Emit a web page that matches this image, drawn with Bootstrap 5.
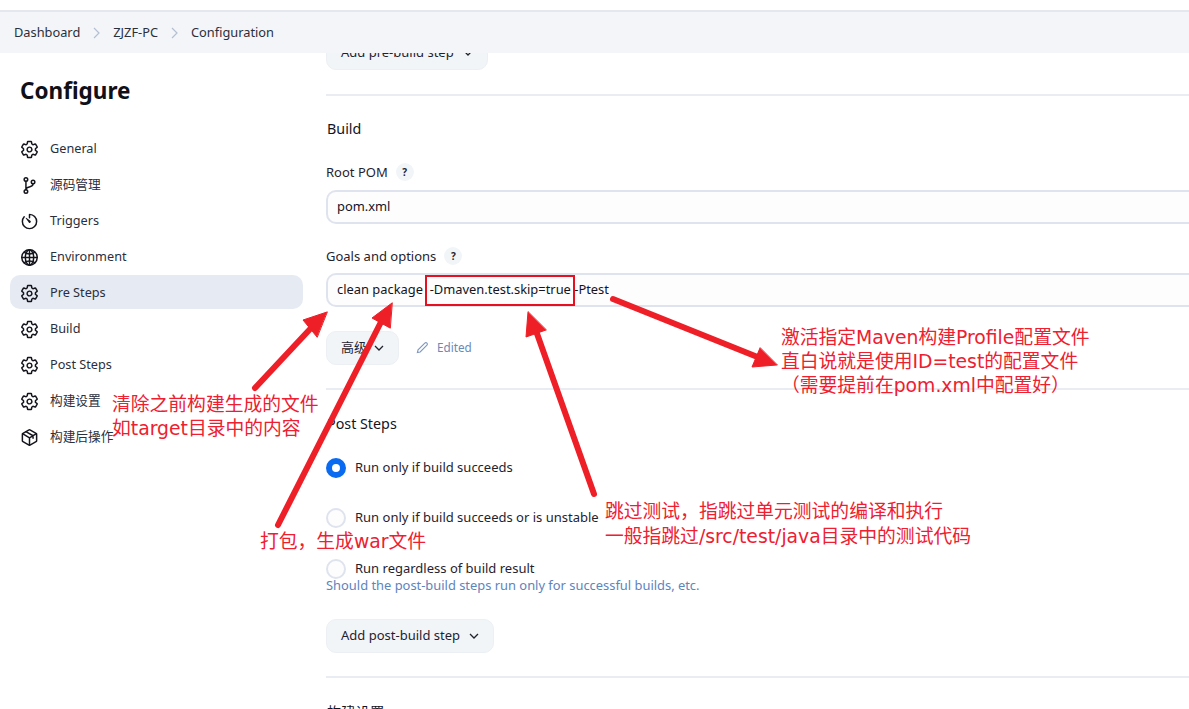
<!DOCTYPE html>
<html lang="zh"><head><meta charset="utf-8"><title>Configure</title>
<link href="https://cdn.jsdelivr.net/npm/bootstrap@5.3.0/dist/css/bootstrap.min.css" rel="stylesheet">
<style>
html,body{height:709px;overflow:hidden}
body{font-family:"Noto Sans","Noto Sans CJK SC",sans-serif;font-size:13px;color:#14141f;background:#fff;position:relative}
.top-strip{height:12px;border-bottom:2px solid #e4e7ee}
.crumbs{height:41px;background:rgba(243,245,248,.96);position:relative;z-index:2;padding-left:14px;gap:10px;font-size:12.8px;color:#2a2f3c}
.crumbs svg{width:9px;height:12px;margin:0 2px}
.page{height:656px;overflow:hidden}
.side{width:326px;flex:none;padding:0 23px 0 10px}
.side h1{font-size:22.5px;font-weight:700;line-height:30px;margin:23px 0 25px 10px;color:#101018}
.side-item{height:34px;margin-bottom:2px;padding:2px 0 0 10px;gap:11px;border-radius:10px;color:#2a2f3c;font-size:12.7px}
.side-item svg{width:19px;height:19px;flex:none}
.side-item.on{background:#e6eaf2}
.ico-line{fill:none;stroke:#14151c;stroke-width:40;stroke-linejoin:round;stroke-linecap:round}
.ico-fill{fill:#14151c}
.main{flex:1;margin-top:-17px;min-width:0}
.soft-btn{height:34px;width:fit-content;border-radius:10px;background:#f2f5f8;border:1px solid #ecf0f4;padding:0 14px;gap:9px;font-size:13px;color:#1e2230}
.soft-btn svg{width:10px;height:6px}
.soft-btn.tight{gap:7px}
.rule{height:2px;background:#e9edf3;border:0;opacity:1;margin:0}
.sect{font-size:14.3px;line-height:20px;color:#14141f;margin-left:1px}
.fld-label{font-size:13px;line-height:18px;gap:8px;color:#1f2330}
.hint{width:18px;height:18px;border-radius:50%;background:#f2f5f8;font-size:10px;font-weight:700}
.txt{height:34px;border:2px solid #dfe3ee;border-right:0;border-radius:10px 0 0 10px;background:#fdfdfe;padding-left:9px;font-size:12.9px;color:#14141f;width:calc(100% + 10px)}
.edited{color:#6b89b5;font-size:11.7px;gap:8px}
.edited svg{width:13px;height:13px}
.radio-row{gap:9px;font-size:13px;color:#1f2330;height:20px}
.radio-dot{width:20px;height:20px;border-radius:50%;border:2px solid #dfe3ee;background:#fdfdfe;flex:none}
.radio-dot.on{border:6px solid #0b6bf0;background:#fff}
.help-line{font-size:12.9px;color:#5d84bd;line-height:14px}
.draw{position:absolute;left:0;top:0;width:1189px;height:709px;pointer-events:none;z-index:5}
.note{position:absolute;z-index:6;color:#ee2030;font-family:"DejaVu Sans","Noto Sans CJK SC",sans-serif;font-size:18.8px;line-height:24px;white-space:nowrap}
.m-a{left:112px;top:393px}
.m-b{left:260px;top:530px}
.m-c{left:605px;top:499px;line-height:25px}
.m-d{left:781px;top:326px}
.redbox{position:absolute;left:425px;top:275px;width:150px;height:31px;border:2px solid #e8101f;z-index:4}
</style></head><body>
<div class="top-strip"></div>
<nav class="crumbs d-flex align-items-center">
<span>Dashboard</span><svg viewBox="0 0 9 12"><path d="M2 1l5 5-5 5" fill="none" stroke="#b4c0d2" stroke-width="1.2"/></svg>
<span>ZJZF-PC</span><svg viewBox="0 0 9 12"><path d="M2 1l5 5-5 5" fill="none" stroke="#b4c0d2" stroke-width="1.2"/></svg>
<span>Configuration</span></nav>
<svg width="0" height="0" class="position-absolute"><defs>
<symbol id="gear" viewBox="0 0 512 512"><path class="ico-line" d="M262.29 192.31a64 64 0 1057.4 57.4 64.13 64.13 0 00-57.4-57.4zM416.39 256a154.34 154.34 0 01-1.53 20.79l45.21 35.46a10.81 10.81 0 012.45 13.75l-42.77 74a10.81 10.81 0 01-13.14 4.59l-44.9-18.08a16.11 16.11 0 00-15.17 1.75A164.48 164.48 0 01325 400.8a15.94 15.94 0 00-8.82 12.14l-6.73 47.89a11.08 11.08 0 01-10.68 9.17h-85.54a11.11 11.11 0 01-10.69-8.87l-6.72-47.82a16.07 16.07 0 00-9-12.22 155.3 155.3 0 01-21.46-12.57 16 16 0 00-15.11-1.71l-44.89 18.07a10.81 10.81 0 01-13.14-4.58l-42.77-74a10.8 10.8 0 012.45-13.75l38.21-30a16.05 16.05 0 006-14.08c-.36-4.17-.58-8.33-.58-12.5s.21-8.27.58-12.35a16 16 0 00-6.07-13.94l-38.19-30A10.81 10.81 0 0149.48 186l42.77-74a10.81 10.81 0 0113.14-4.59l44.9 18.08a16.11 16.11 0 0015.17-1.75A164.48 164.48 0 01187 111.2a15.94 15.94 0 008.82-12.14l6.73-47.89A11.08 11.08 0 01213.23 42h85.54a11.11 11.11 0 0110.69 8.87l6.72 47.82a16.07 16.07 0 009 12.22 155.3 155.3 0 0121.46 12.57 16 16 0 0015.11 1.71l44.89-18.07a10.81 10.81 0 0113.14 4.58l42.77 74a10.8 10.8 0 01-2.45 13.75l-38.21 30a16.05 16.05 0 00-6.05 14.08c.33 4.14.55 8.3.55 12.47z"/></symbol>
</defs></svg>
<div class="page d-flex">
<aside class="side">
<h1>Configure</h1>
<div class="side-item d-flex align-items-center"><svg><use href="#gear"/></svg>General</div>
<div class="side-item d-flex align-items-center"><svg viewBox="0 0 512 512"><g class="ico-line"><circle cx="160" cy="96" r="48"/><circle cx="160" cy="416" r="48"/><circle cx="352" cy="160" r="48"/><path d="M160 368V144M352 208c0 128-192 48-192 160"/></g></svg>源码管理</div>
<div class="side-item d-flex align-items-center"><svg viewBox="0 0 512 512"><path class="ico-line" d="M112.91 128A191.85 191.85 0 0064 254c-1.18 106.35 85.65 193.8 192 194 106.2.2 192-85.83 192-192 0-104.54-83.55-189.61-187.5-192a4.36 4.36 0 00-4.5 4.37V152"/><path class="ico-fill" d="M233.38 278.63l-79-113a8.13 8.13 0 0111.32-11.32l113 79a32.5 32.5 0 01-37.25 53.26 33.21 33.21 0 01-8.07-7.94z"/></svg>Triggers</div>
<div class="side-item d-flex align-items-center"><svg viewBox="0 0 512 512"><g class="ico-line"><path d="M256 48C141.13 48 48 141.13 48 256s93.13 208 208 208 208-93.13 208-208S370.87 48 256 48z"/><path d="M256 48c-58.07 0-112.67 93.31-112.67 208S197.93 464 256 464s112.67-93.31 112.67-208S314.07 48 256 48z"/><path d="M117.33 117.33c38.24 27.15 86.38 43.34 138.67 43.34s100.43-16.19 138.67-43.34M394.67 394.67c-38.24-27.15-86.38-43.34-138.67-43.34s-100.43 16.19-138.67 43.34"/><path d="M256 48v416M464 256H48"/></g></svg>Environment</div>
<div class="side-item on d-flex align-items-center"><svg><use href="#gear"/></svg>Pre Steps</div>
<div class="side-item d-flex align-items-center"><svg><use href="#gear"/></svg>Build</div>
<div class="side-item d-flex align-items-center"><svg><use href="#gear"/></svg>Post Steps</div>
<div class="side-item d-flex align-items-center"><svg><use href="#gear"/></svg>构建设置</div>
<div class="side-item d-flex align-items-center"><svg viewBox="0 0 512 512"><g class="ico-line"><path d="M448 341.370V170.610A32 32 0 00432.110 143l-152-88.460a47.940 47.940 0 00-48.240 0L79.890 143A32 32 0 0064 170.610v170.760A32 32 0 0079.890 369l152 88.460a48 48 0 0048.240 0l152-88.460A32 32 0 00448 341.370z"/><path d="M69 154l187 110 187-110M256 464V264M160 99l192 110v70"/></g></svg>构建后操作</div>
</aside>
<main class="main">
<div class="soft-btn d-flex align-items-center">Add pre-build step<svg viewBox="0 0 10 6"><path d="M1 1l4 4 4-4" fill="none" stroke="#20222c" stroke-width="1.300"/></svg></div>
<hr class="rule mt-4">
<div class="sect" style="margin-top:23px">Build</div>
<div class="fld-label d-flex align-items-center" style="margin-top:24px">Root POM<span class="hint d-flex align-items-center justify-content-center">?</span></div>
<div class="txt d-flex align-items-center" style="margin-top:9px">pom.xml</div>
<div class="fld-label d-flex align-items-center" style="margin-top:23px">Goals and options<span class="hint d-flex align-items-center justify-content-center">?</span></div>
<div class="txt d-flex align-items-center" style="margin-top:8px">clean package&nbsp; -Dmaven.test.skip=true -Ptest</div>
<div class="d-flex align-items-center" style="margin-top:24px;gap:17px"><div class="soft-btn tight d-flex align-items-center">高级<svg viewBox="0 0 10 6"><path d="M1 1l4 4 4-4" fill="none" stroke="#20222c" stroke-width="1.300"/></svg></div>
<div class="edited d-flex align-items-center"><svg viewBox="0 0 14 14"><path d="M1.500 12.500l.7-3L9.500 2.200a1.500 1.500 0 0 1 2.300 2.300L4.500 11.800z" fill="none" stroke="#7f98bf" stroke-width="1.200"/></svg>Edited</div></div>
<hr class="rule" style="margin-top:23px">
<div class="sect" style="margin-top:24px">Post Steps</div>
<div class="radio-row d-flex align-items-center" style="margin-top:24px"><span class="radio-dot on"></span>Run only if build succeeds</div>
<div class="radio-row d-flex align-items-center" style="margin-top:30px"><span class="radio-dot"></span>Run only if build succeeds or is unstable</div>
<div class="radio-row d-flex align-items-center" style="margin-top:31px"><span class="radio-dot"></span>Run regardless of build result</div>
<div class="help-line" style="margin-top:-1px">Should the post-build steps run only for successful builds, etc.</div>
<div class="soft-btn d-flex align-items-center" style="margin-top:27px">Add post-build step<svg viewBox="0 0 10 6"><path d="M1 1l4 4 4-4" fill="none" stroke="#20222c" stroke-width="1.300"/></svg></div>
<hr class="rule" style="margin-top:23px">
<div class="sect" style="margin-top:25px">构建设置</div>
</main>
</div>
<div class="redbox"></div>
<svg class="draw" viewBox="0 0 1189 709">
<g fill="#ee1f27" stroke="#ee1f27" stroke-linecap="round">
<path d="M255 388L312 327" stroke-width="6"/><path d="M327 312L303 320 317 337z" stroke-width="1"/>
<path d="M278 525L382 320" stroke-width="6"/><path d="M392 303L372 318 390 328z" stroke-width="1"/>
<path d="M594 494L535 328" stroke-width="6"/><path d="M528 312L526 337 546 330z" stroke-width="1"/>
<path d="M613 299L760 358" stroke-width="6"/><path d="M777 365L752 367 760 348z" stroke-width="1"/>
</g></svg>
<div class="note m-a">清除之前构建生成的文件<br>如target目录中的内容</div>
<div class="note m-b">打包，生成war文件</div>
<div class="note m-c">跳过测试，指跳过单元测试的编译和执行<br>一般指跳过/src/test/java目录中的测试代码</div>
<div class="note m-d">激活指定Maven构建Profile配置文件<br>直白说就是使用ID=test的配置文件<br>（需要提前在pom.xml中配置好）</div>
</body></html>
